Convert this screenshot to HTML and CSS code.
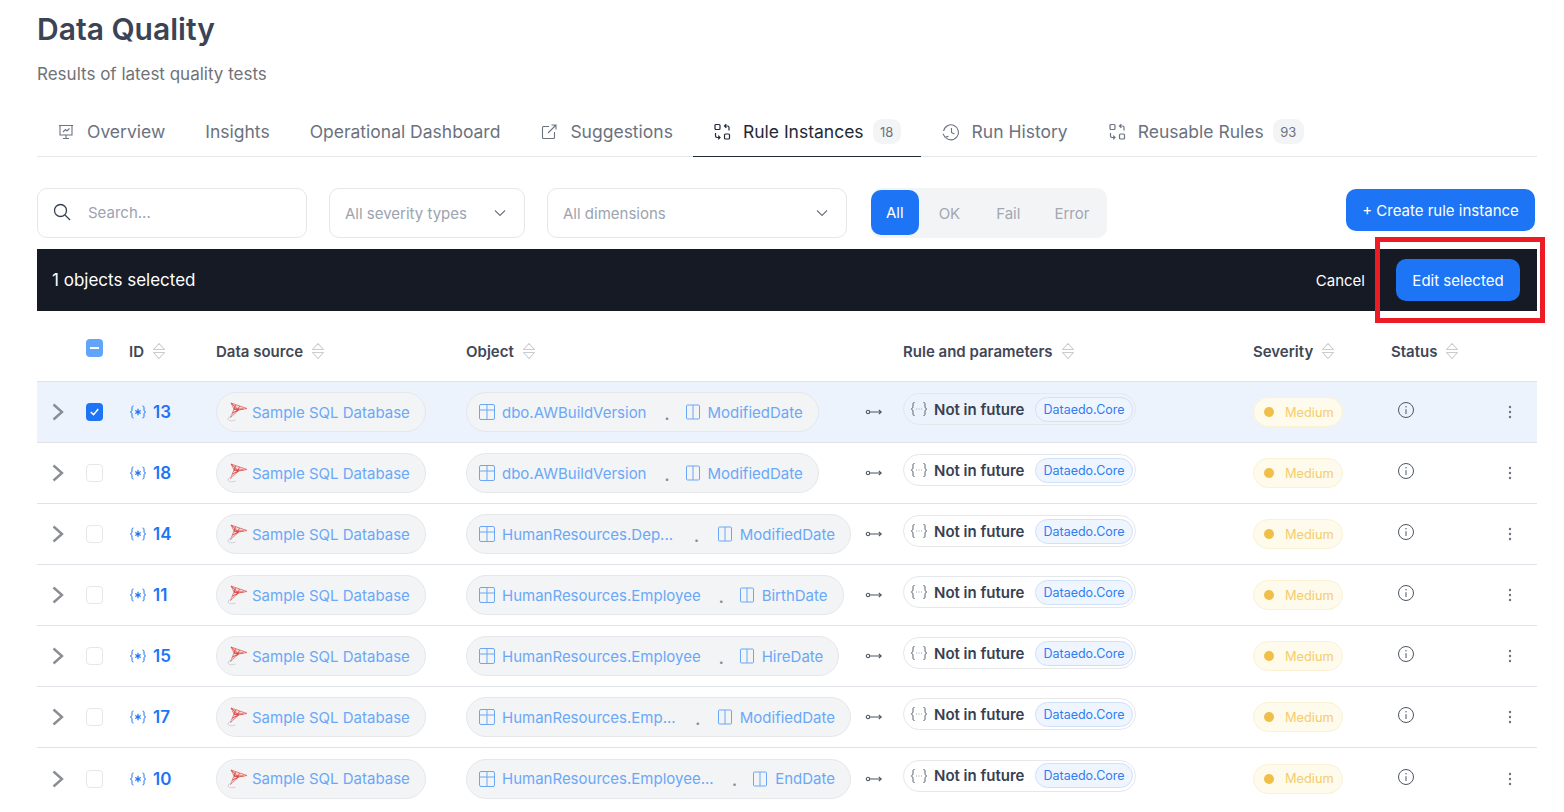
FILE: index.html
```html
<!DOCTYPE html>
<html lang="en">
<head>
    <meta charset="UTF-8">
    <meta name="viewport" content="width=device-width, initial-scale=1.0">
    <title>Data Quality</title>
    <link rel="stylesheet" href="styles.css">
</head>
<body>
    <svg class="sprite" xmlns="http://www.w3.org/2000/svg">
        <symbol id="i-sort" viewBox="0 0 14 18"><path d="M1.500 7.500 7 1.500l5.500 6zM1.500 10.500h11L7 16.500z" fill="none" stroke="currentColor" stroke-width="1.100" stroke-linejoin="round"/></symbol>
        <symbol id="i-chevron" viewBox="0 0 12 18"><path d="M1.500 1.500l8.500 7.500-8.500 7.500" fill="none" stroke="currentColor" stroke-width="2.400"/></symbol>
        <symbol id="i-var" viewBox="0 0 18 14"><path d="M4.500 1C2.800 1 3 2.200 3 4s-.2 2.500-1.600 3C2.800 7.500 3 8.200 3 10s-.2 3 1.500 3M13.500 1c1.700 0 1.500 1.200 1.500 3s.2 2.500 1.600 3c-1.400.5-1.600 1.200-1.600 3s.2 3-1.500 3" fill="none" stroke="currentColor" stroke-width="1"/><path d="M9 3.800v6.400M6.300 5.400l5.400 3.200M11.700 5.400 6.300 8.600" stroke="currentColor" stroke-width="1.200"/></symbol>
        <symbol id="i-fn" viewBox="0 0 18 16"><path d="M4.500 1.500C2.800 1.500 3 2.700 3 4.500S2.800 7.300 1.400 8C2.800 8.700 3 9.700 3 11.500s-.2 3 1.500 3M13.500 1.500c1.700 0 1.500 1.200 1.500 3s.2 2.800 1.600 3.500c-1.400.7-1.600 1.700-1.600 3.500s.2 3-1.500 3" fill="none" stroke="#4b5563" stroke-width="1"/><path d="M6 8h1M8.500 8h1M11 8h1" stroke="#9ca3af" stroke-width="1"/></symbol>
        <symbol id="i-table" viewBox="0 0 16 16"><rect x=".5" y=".5" width="15" height="15" rx="1.500" fill="none" stroke="currentColor"/><path d="M.5 6h15M8 .5v15" stroke="currentColor"/></symbol>
        <symbol id="i-column" viewBox="0 0 16 16"><rect x="1.500" y="1" width="13" height="14" rx="1" fill="none" stroke="currentColor"/><path d="M8 1v14" stroke="currentColor"/></symbol>
        <symbol id="i-link" viewBox="0 0 18 8"><circle cx="3" cy="4" r="1.700" fill="none" stroke="currentColor" stroke-width="1.100"/><path d="M5 4h11M13.800 1.800 16.200 4l-2.400 2.200" fill="none" stroke="currentColor" stroke-width="1.100"/></symbol>
        <symbol id="i-info" viewBox="0 0 18 18"><circle cx="9" cy="9" r="7.500" fill="none" stroke="currentColor" stroke-width="1"/><path d="M9 8.200v4.800" stroke="currentColor" stroke-width="1"/><circle cx="9" cy="5.800" r=".7" fill="currentColor"/></symbol>
        <symbol id="i-dots" viewBox="0 0 4 14"><circle cx="2" cy="2" r="1.200" fill="currentColor"/><circle cx="2" cy="7" r="1.200" fill="currentColor"/><circle cx="2" cy="12" r="1.200" fill="currentColor"/></symbol>
        <symbol id="i-rules" viewBox="0 0 18 18"><rect x="2" y="1.500" width="5" height="5" rx="1" fill="none" stroke="currentColor" stroke-width="1.200"/><rect x="11.500" y="11" width="5" height="5" rx="1" fill="none" stroke="currentColor" stroke-width="1.200"/><path d="M16 7.500V4.500C16 3.500 15.200 3 14.500 3H11.500M13.300 1.200 11.500 3l1.800 1.800M2.500 10v2.800c0 1 .8 1.700 1.500 1.700H7M5.200 12.700 7 14.500l-1.800 1.800" fill="none" stroke="currentColor" stroke-width="1.200"/></symbol>
        <symbol id="i-sql" viewBox="0 0 24 20"><path d="M4 1 20 6.500 11.500 8 3.500 15.500 7 7z" fill="#f8d5d5" stroke="#de6360" stroke-width=".8" stroke-linejoin="round"/><path d="M4 1l7.500 7M7 7h9.500M8.500 3 7 7l4.500 1M12.500 4.200 9.500 10M5.500 11l6-3" fill="none" stroke="#d2413e" stroke-width=".8"/><path d="M6 13c-3 1-5 2.500-5 4s3.500 2.500 7.500 1" fill="none" stroke="#c9ccd1" stroke-width=".9"/></symbol>
    </svg>

    <div class="page">
        <h1 class="title">Data Quality</h1>
        <p class="subtitle">Results of latest quality tests</p>

        <nav class="tabs">
            <a class="tab">
                <svg class="tab-icon" viewBox="0 0 18 18"><path d="M2 2.500h14M3 2.500v9.500h12V2.500M9 12v3M6 15.500h6M6 9l2.500-2.500 1.500 1.500 2.500-2.500" fill="none" stroke="currentColor" stroke-width="1.100"/></svg>
                Overview
            </a>
            <a class="tab">Insights</a>
            <a class="tab">Operational Dashboard</a>
            <a class="tab">
                <svg class="tab-icon" viewBox="0 0 18 18"><path d="M9 3.500H3.500a1 1 0 0 0-1 1v10a1 1 0 0 0 1 1h10a1 1 0 0 0 1-1V9M8 10l8-8M11.500 2H16v4.500" fill="none" stroke="currentColor" stroke-width="1.100"/></svg>
                Suggestions
            </a>
            <a class="tab active">
                <svg class="tab-icon"><use href="#i-rules"/></svg>
                Rule Instances
                <span class="tab-badge">18</span>
            </a>
            <a class="tab">
                <svg class="tab-icon" viewBox="0 0 18 18"><path d="M1.600 8a7.500 7.500 0 1 1 1.500 6M1 10.800l2 3.400 3.400-.8M9.500 5v4.500l3 1.500" fill="none" stroke="currentColor" stroke-width="1.100"/></svg>
                Run History
            </a>
            <a class="tab">
                <svg class="tab-icon"><use href="#i-rules"/></svg>
                Reusable Rules
                <span class="tab-badge wide">93</span>
            </a>
        </nav>

        <div class="toolbar">
            <label class="search">
                <svg class="search-icon" viewBox="0 0 18 18"><circle cx="7.500" cy="7.500" r="6" fill="none" stroke="currentColor" stroke-width="1.300"/><path d="M12 12l5 5" stroke="currentColor" stroke-width="1.300"/></svg>
                <span>Search...</span>
            </label>
            <div class="select severity-select">
                All severity types
                <svg class="select-arrow" viewBox="0 0 12 8"><path d="M1 1.500l5 5 5-5" fill="none" stroke="currentColor" stroke-width="1.100"/></svg>
            </div>
            <div class="select dimension-select">
                All dimensions
                <svg class="select-arrow" viewBox="0 0 12 8"><path d="M1 1.500l5 5 5-5" fill="none" stroke="currentColor" stroke-width="1.100"/></svg>
            </div>
            <div class="segments">
                <span class="segment on">All</span>
                <span class="segment ok">OK</span>
                <span class="segment fail">Fail</span>
                <span class="segment">Error</span>
            </div>
            <button class="btn create-btn">+ Create rule instance</button>
        </div>

        <div class="selection-bar">
            <span>1 objects selected</span>
            <span class="cancel">Cancel</span>
            <button class="btn edit-btn">Edit selected</button>
            <div class="highlight"></div>
        </div>

        <div class="grid-row head">
            <span></span>
            <span class="check partial"></span>
            <span class="th">ID <svg class="sort"><use href="#i-sort"/></svg></span>
            <span class="th">Data source <svg class="sort"><use href="#i-sort"/></svg></span>
            <span class="th">Object <svg class="sort"><use href="#i-sort"/></svg></span>
            <span></span>
            <span class="th">Rule and parameters <svg class="sort"><use href="#i-sort"/></svg></span>
            <span class="th">Severity <svg class="sort"><use href="#i-sort"/></svg></span>
            <span class="th">Status <svg class="sort"><use href="#i-sort"/></svg></span>
            <span></span>
        </div>

        <div id="rows"></div>
    </div>

    <script>
        let rules = [
            { id: 13, table: "dbo.AWBuildVersion", column: "ModifiedDate", selected: true },
            { id: 18, table: "dbo.AWBuildVersion", column: "ModifiedDate" },
            { id: 14, table: "HumanResources.Dep...", column: "ModifiedDate", full: true },
            { id: 11, table: "HumanResources.Employee", column: "BirthDate" },
            { id: 15, table: "HumanResources.Employee", column: "HireDate" },
            { id: 17, table: "HumanResources.Emp...", column: "ModifiedDate", full: true },
            { id: 10, table: "HumanResources.Employee...", column: "EndDate", full: true }
        ];

        let rowsHTML = "";
        rules.forEach((rule) => {
            rowsHTML += `
            <div class="grid-row item ${rule.selected ? "selected" : ""}">
                <svg class="expander"><use href="#i-chevron"/></svg>
                <span class="check ${rule.selected ? "checked" : ""}">${rule.selected ? '<svg viewBox="0 0 18 18"><path d="M5 9.500l3 2.800 5-6" fill="none" stroke="#fff" stroke-width="1.600"/></svg>' : ""}</span>
                <span class="rule-id"><svg class="var-icon"><use href="#i-var"/></svg>${rule.id}</span>
                <span class="chip source"><svg class="sql-icon"><use href="#i-sql"/></svg>Sample SQL Database</span>
                <span class="chip object ${rule.full ? "full" : ""}">
                    <svg class="obj-icon"><use href="#i-table"/></svg>
                    <span class="obj-name">${rule.table}</span>
                    <span class="obj-dot">.</span>
                    <svg class="obj-icon"><use href="#i-column"/></svg>
                    <span class="col-name">${rule.column}</span>
                </span>
                <svg class="link-icon"><use href="#i-link"/></svg>
                <span class="rule">
                    <svg class="fn-icon"><use href="#i-fn"/></svg>
                    <b>Not in future</b>
                    <span class="pack">Dataedo.Core</span>
                </span>
                <span class="severity"><i class="dot"></i>Medium</span>
                <svg class="info"><use href="#i-info"/></svg>
                <svg class="menu"><use href="#i-dots"/></svg>
            </div>`;
        });
        document.getElementById("rows").innerHTML = rowsHTML;
    </script>
</body>
</html>
```

FILE: styles.css
```css
* {
    box-sizing: border-box;
}

html,
body {
    height: 812px;
    overflow: hidden;
}

body {
    margin: 0;
    padding: 0;
    font-family: Inter, "Liberation Sans", sans-serif;
    background-color: #fff;
    color: #374151;
}

.sprite {
    display: none;
}

.page {
    width: 1500px;
    margin-left: 37px;
    padding-top: 9px;
}

.title {
    margin: 0;
    font-size: 30px;
    line-height: 40px;
    font-weight: 600;
    color: #3b4356;
}

.subtitle {
    margin: 15px 0 0;
    font-size: 17px;
    line-height: 20px;
    color: #6f7277;
}

/* tabs */
.tabs {
    display: flex;
    height: 50px;
    margin-top: 23px;
    border-bottom: 1px solid #e5e7eb;
}

.tab {
    display: flex;
    align-items: center;
    height: 50px;
    padding: 0 20px;
    border-bottom: 1px solid transparent;
    font-size: 17.5px;
    color: #6b7280;
}

.tab.active {
    color: #1f2937;
    border-bottom-color: #1f2937;
}

.tab.active + .tab {
    margin-left: 1px;
}

.tab-icon {
    width: 18px;
    height: 18px;
    margin-right: 12px;
}

.tab-badge {
    display: flex;
    align-items: center;
    justify-content: center;
    width: 28px;
    height: 25px;
    margin-left: 9px;
    border-radius: 9px;
    background-color: #f3f4f6;
    font-size: 13px;
    color: #6b7280;
}

.tab-badge.wide {
    width: 31px;
}

/* filters */
.toolbar {
    display: flex;
    height: 50px;
    margin-top: 31px;
}

.search,
.select {
    display: flex;
    align-items: center;
    height: 50px;
    background-color: #fff;
    border: 1px solid #e5e7eb;
    border-radius: 10px;
    font-size: 15px;
    color: #9ca3af;
}

.search {
    width: 270px;
    padding: 0 0 2px 15px;
}

.search-icon {
    width: 18px;
    height: 18px;
    margin-right: 17px;
    color: #374151;
}

.select {
    justify-content: space-between;
    padding: 0 18px 0 15px;
}

.severity-select {
    width: 196px;
    margin-left: 22px;
}

.dimension-select {
    width: 300px;
    margin-left: 22px;
}

.select-arrow {
    width: 12px;
    height: 8px;
    color: #6b7280;
}

.segments {
    display: flex;
    align-items: center;
    width: 236px;
    margin-left: 24px;
    border-radius: 10px;
    background-color: #f3f4f6;
    font-size: 15px;
    color: #a3a7b0;
}

.segment {
    padding: 0 17px;
}

.segment.on {
    display: flex;
    align-items: center;
    height: 45px;
    margin-bottom: 1px;
    padding: 0 15px;
    border-radius: 10px;
    background-color: #1d74f5;
    color: #fff;
}

.segment.ok {
    margin-left: 3px;
}

.segment.fail {
    margin-left: 2px;
}

.btn {
    height: 42px;
    border: none;
    border-radius: 10px;
    background-color: #1d74f5;
    color: #fff;
    font-family: inherit;
    font-size: 15px;
    cursor: pointer;
}

.create-btn {
    width: 189px;
    margin: 1px 2px 0 auto;
}

/* selection bar */
.selection-bar {
    position: relative;
    display: flex;
    align-items: center;
    height: 62px;
    margin-top: 11px;
    padding: 0 17px 0 15px;
    background-color: #151a25;
    color: #fff;
    font-size: 17px;
}

.cancel {
    margin-left: auto;
    font-size: 15px;
}

.edit-btn {
    width: 124px;
    margin-left: 31px;
}

.highlight {
    position: absolute;
    left: 1338px;
    top: -12px;
    width: 170px;
    height: 86px;
    border: 5px solid #ed1c24;
}

/* table */
.grid-row {
    display: grid;
    grid-template-columns: 49px 43px 87px 250px 399px 38px 350px 138px 114px 32px;
    align-items: center;
}

.head {
    height: 71px;
    padding-top: 10px;
    border-bottom: 1px solid #dfe2e7;
}

.th {
    display: flex;
    align-items: center;
    font-size: 15px;
    font-weight: 600;
    color: #414756;
}

.sort {
    width: 14px;
    height: 18px;
    margin-left: 8px;
    color: #c9ccd1;
}

.item {
    height: 61px;
    border-bottom: 1px solid #dfe2e7;
}

.item:last-child {
    border-bottom: none;
}

.item.selected {
    background-color: #edf3fd;
}

.expander {
    width: 12px;
    height: 18px;
    margin-left: 15px;
    color: #8a8d93;
}

.check {
    display: block;
    width: 17px;
    height: 18px;
    border: 1px solid #e5e7eb;
    border-radius: 4px;
    background-color: #fff;
}

.check.checked {
    border: none;
    background-color: #1d74f5;
}

.check.checked svg {
    display: block;
}

.check.partial {
    position: relative;
    border: none;
    background-color: #60a5fa;
    margin-top: -6px;
}

.check.partial::after {
    content: "";
    position: absolute;
    left: 4px;
    top: 8px;
    width: 9px;
    height: 2px;
    background-color: #fff;
}

.rule-id {
    display: flex;
    align-items: center;
    font-size: 17px;
    font-weight: 600;
    color: #1d74f5;
}

.var-icon {
    width: 18px;
    height: 14px;
    margin-right: 6px;
}

.chip {
    display: inline-flex;
    align-items: center;
    justify-self: start;
    height: 40px;
    border: 1px solid #e5e7eb;
    border-radius: 20px;
    background-color: #f3f4f6;
    font-size: 15px;
    color: #6aa8f7;
}

.source {
    width: 210px;
    padding-left: 10px;
}

.sql-icon {
    width: 24px;
    height: 20px;
    margin-right: 1px;
}

.object {
    padding: 0 15px 0 12px;
}

.object.full {
    width: 385px;
}

.full .obj-dot {
    flex: 1;
}

.obj-icon {
    width: 16px;
    height: 16px;
    margin-right: 7px;
}

.obj-dot {
    width: 38px;
    padding: 4px 0 0 3px;
    text-align: center;
    font-weight: 700;
    color: #8a8d93;
}

.link-icon {
    width: 18px;
    height: 8px;
    color: #4b5563;
}

.rule {
    display: inline-flex;
    align-items: center;
    justify-self: start;
    width: 233px;
    height: 32px;
    margin-bottom: 6px;
    padding-left: 6px;
    border: 1px solid #e5e7eb;
    border-radius: 16px;
    font-size: 15px;
    color: #374151;
}

.fn-icon {
    width: 18px;
    height: 16px;
    margin-right: 6px;
}

.rule b {
    font-weight: 600;
}

.pack {
    display: flex;
    align-items: center;
    height: 25px;
    margin-left: 11px;
    padding: 0 7px;
    border: 1px solid #cfe0fb;
    border-radius: 13px;
    background-color: #eff5fe;
    font-size: 12.5px;
    color: #2f7df0;
}

.severity {
    display: inline-flex;
    align-items: center;
    justify-self: start;
    width: 90px;
    height: 30px;
    padding-left: 10px;
    border: 1px solid #fbf1d3;
    border-radius: 15px;
    background-color: #fefaec;
    font-size: 12.8px;
    color: #f3cd6e;
}

.dot {
    width: 10px;
    height: 10px;
    margin-right: 11px;
    border-radius: 50%;
    background-color: #efbf47;
}

.info {
    width: 18px;
    height: 18px;
    margin: 0 0 4px 6px;
    color: #4b5563;
}

.menu {
    width: 4px;
    height: 14px;
    margin-left: 3px;
    color: #6b7280;
}
```
